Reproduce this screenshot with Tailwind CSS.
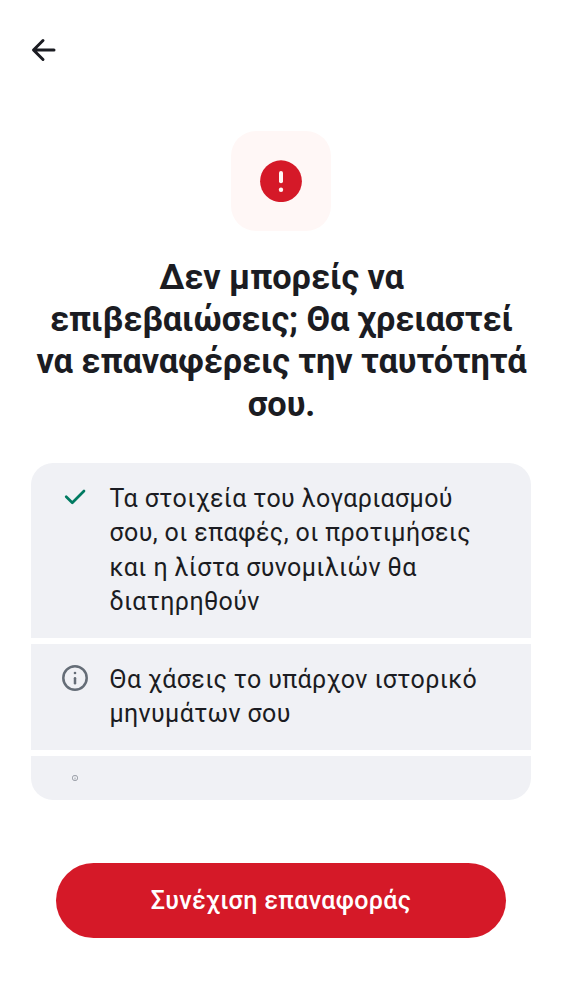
<!DOCTYPE html>
<html lang="el">
<head>
<meta charset="utf-8">
<title>Επαναφορά ταυτότητας</title>
<script src="https://cdn.jsdelivr.net/npm/@tailwindcss/browser@4"></script>
</head>
<body class="bg-white">
<main class="flex h-[1000px] w-[562px] flex-col overflow-hidden bg-white font-['Roboto',sans-serif] text-[#1b1c22]">
  <header class="flex h-[99px] shrink-0 items-center pl-[31px]">
    <svg class="size-[25px]" viewBox="0 0 25 25" fill="none" stroke="currentColor" stroke-width="3" stroke-linecap="round" stroke-linejoin="round"><path d="M23 13H3M12 3.500L2.500 13L12 22.500"/></svg>
  </header>
  <div class="mt-[32px] flex size-[100px] shrink-0 items-center justify-center self-center rounded-[25px] bg-[#fff7f6]">
    <svg class="size-[42px]" viewBox="0 0 42 42"><circle cx="21" cy="21.200" r="20.900" fill="#d51928"/><path d="M21 13V21.200" stroke="#fff7f6" stroke-width="4" stroke-linecap="round"/><circle cx="21" cy="29.700" r="2.200" fill="#fff7f6"/></svg>
  </div>
  <h1 class="mt-[25px] h-[171px] pl-px text-center text-[34.375px] leading-[42.200px] font-bold tracking-[-0.090px] whitespace-nowrap">Δεν μπορείς να<br>επιβεβαιώσεις; Θα χρειαστεί<br>να επαναφέρεις την ταυτότητά<br>σου.</h1>
  <ul class="mx-[31px] mt-[35.500px] flex flex-col gap-1.5 text-[25px] leading-[34.400px] tracking-[0.380px] whitespace-nowrap">
    <li class="flex h-[175px] gap-[21.500px] rounded-t-[22px] bg-[#f0f1f5] pt-[19px] pl-[31px]">
      <svg class="mt-[2px] size-[26px]" viewBox="0 0 26 26" fill="none" stroke="#007a61" stroke-width="2.700" stroke-linecap="round" stroke-linejoin="round"><path d="M4.200 12.800L10.300 18.800L22 7"/></svg>
      <p class="pt-[0.300px]">Τα στοιχεία του λογαριασμού<br>σου, οι επαφές, οι προτιμήσεις<br>και η λίστα συνομιλιών θα<br>διατηρηθούν</p>
    </li>
    <li class="flex h-[106px] gap-[21.500px] bg-[#f0f1f5] pt-[19px] pl-[31px]">
      <svg class="mt-[2.500px] size-[26px]" viewBox="0 0 26 26" fill="none" stroke="#656d77" stroke-width="2.500"><circle cx="13" cy="13" r="11.700"/><path d="M13 13.300V18.200" stroke-linecap="round"/><circle cx="13" cy="8" r="1.300" fill="#656d77" stroke="none"/></svg>
      <p class="pt-[0.300px]">Θα χάσεις το υπάρχον ιστορικό<br>μηνυμάτων σου</p>
    </li>
    <li class="flex h-[44px] rounded-b-[22px] bg-[#f0f1f5] pt-[19px] pl-[41px]">
      <svg class="size-1.5" viewBox="0 0 26 26" fill="none" stroke="#656d77" stroke-width="2.500"><circle cx="13" cy="13" r="11.700"/><path d="M13 13.300V18.200" stroke-linecap="round"/><circle cx="13" cy="8" r="1.300" fill="#656d77" stroke="none"/></svg>
    </li>
  </ul>
  <button class="mt-[63px] h-[75px] w-[450px] shrink-0 self-center rounded-full bg-[#d51928] pt-px text-[25px] leading-[34px] font-medium tracking-[0.350px] text-white">Συνέχιση επαναφοράς</button>
</main>
</body>
</html>
